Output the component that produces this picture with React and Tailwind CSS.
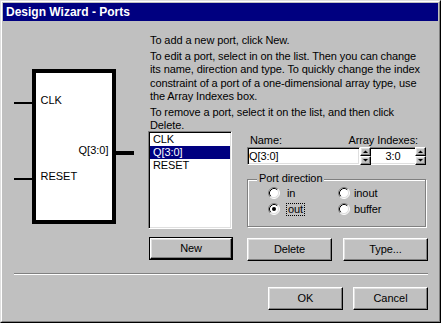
import React from 'react';

// classic 3D borders
const raised = "border border-t-white border-l-white border-r-black border-b-black shadow-[inset_-1px_-1px_0_#808080,inset_1px_1px_0_#dfdfdf]";
const sunken = "border border-t-[#808080] border-l-[#808080] border-r-white border-b-white shadow-[inset_1px_1px_0_#000,inset_-1px_-1px_0_#dfdfdf]";

function Button({ children, className = '' }) {
  return (
    <button className={`${raised} bg-[#c0c0c0] flex items-center justify-center text-[11px] leading-[13px] text-black shrink-0 ${className}`}>
      {children}
    </button>
  );
}

function Radio({ checked }) {
  return (
    <svg width="12" height="12" viewBox="0 0 12 12" className="shrink-0">
      <circle cx="6" cy="6" r="5" fill="#fff" />
      <path d="M2.11 9.89A5.5 5.5 0 0 1 9.89 2.11" fill="none" stroke="#808080" />
      <path d="M9.89 2.11A5.5 5.5 0 0 1 2.11 9.89" fill="none" stroke="#fff" />
      <path d="M2.82 9.18A4.5 4.5 0 0 1 9.18 2.82" fill="none" stroke="#000" />
      <path d="M9.18 2.82A4.5 4.5 0 0 1 2.82 9.18" fill="none" stroke="#dfdfdf" />
      {checked && <circle cx="6" cy="6" r="2" fill="#000" />}
    </svg>
  );
}

function Spin() {
  return (
    <div className="flex flex-col w-[11px] h-[18px] shrink-0">
      <div className={`${raised} h-[9px] bg-[#c0c0c0] flex items-center justify-center`}>
        <svg width="5" height="3" viewBox="0 0 5 3"><polygon points="0,3 2.5,0.5 5,3" fill="#000" /></svg>
      </div>
      <div className={`${raised} h-[9px] bg-[#c0c0c0] flex items-center justify-center`}>
        <svg width="5" height="3" viewBox="0 0 5 3"><polygon points="0,0 2.5,2.5 5,0" fill="#000" /></svg>
      </div>
    </div>
  );
}

function Symbol() {
  return (
    <svg width="122" height="160" viewBox="0 0 122 160" className="block">
      <rect x="20" y="4" width="80" height="151" fill="#fff" stroke="#000" strokeWidth="4" />
      <rect x="0" y="35" width="18" height="2" fill="#000" />
      <rect x="0" y="111" width="18" height="2" fill="#000" />
      <rect x="102" y="84" width="18" height="4" fill="#000" />
      <text x="26.5" y="37" fontSize="11" fill="#000" fontFamily="Liberation Sans, Arial, sans-serif">CLK</text>
      <text x="26.5" y="113" fontSize="11" fill="#000" fontFamily="Liberation Sans, Arial, sans-serif">RESET</text>
      <text x="94.5" y="87" fontSize="11" fill="#000" textAnchor="end" fontFamily="Liberation Sans, Arial, sans-serif">Q[3:0]</text>
    </svg>
  );
}

export default function App() {
  const ports = ['CLK', 'Q[3:0]', 'RESET'];

  return (
    <div className="w-[441px] h-[323px] bg-[#c0c0c0] border border-t-[#dfdfdf] border-l-[#dfdfdf] border-r-black border-b-black font-['Liberation_Sans',Arial,sans-serif] text-black">
      <div className="h-full border border-t-white border-l-white border-r-[#808080] border-b-[#808080] p-px flex flex-col">
        {/* title bar */}
        <div className="h-[18px] shrink-0 bg-[#000080] text-white font-bold text-[12px] leading-[18px] pl-[3px]">
          Design Wizard - Ports
        </div>

        <div className="flex h-[252px] shrink-0">
          {/* symbol preview */}
          <div className="w-[145px] shrink-0 pl-[11px] pt-[46px]">
            <Symbol />
          </div>

          <div className="flex-1 pt-[13px] text-[11px] tracking-[-0.1px]">
            <div className="h-[97px] pl-[2px] whitespace-nowrap">
              <p className="leading-[13px]">To add a new port, click New.</p>
              <p className="leading-[13.33px] mt-[3px]">
                To edit a port, select in on the list. Then you can change<br />
                its name, direction and type. To quickly change the index<br />
                constraint of a port of a one-dimensional array type, use<br />
                the Array Indexes box.
              </p>
              <p className="leading-[13px] mt-[3px]">
                To remove a port, select it on the list, and then click<br />
                Delete.
              </p>
            </div>

            <div className="flex">
              <div className="w-[85px] shrink-0">
                <div className={`${sunken} bg-white w-[84px] h-[98px] p-px`}>
                  {ports.map((p) => (
                    <div
                      key={p}
                      className={`h-[13px] leading-[13px] pl-[3px] ${p === 'Q[3:0]' ? 'bg-[#000080] text-white' : ''}`}
                    >
                      {p}
                    </div>
                  ))}
                </div>
                <div className="mt-[8px] ml-px w-[84px] h-[23px] border border-black flex">
                  <Button className="w-full h-full">New</Button>
                </div>
              </div>

              <div className="w-[179px] ml-[14px] shrink-0">
                <div className="pt-[3px] flex justify-between pl-[3px] pr-[8px] leading-[13px]">
                  <span>Name:</span>
                  <span>Array Indexes:</span>
                </div>
                <div className="flex h-[18px]">
                  <div className={`${sunken} bg-white w-[113px] shrink-0 pl-px flex items-center leading-[13px]`}>
                    Q[3:0]
                  </div>
                  <Spin />
                  <div className="w-[44px] shrink-0 bg-white border-t border-t-[#808080] border-b border-b-white shadow-[inset_0_1px_0_#000,inset_0_-1px_0_#dfdfdf] flex items-center justify-center leading-[13px]">
                    3:0
                  </div>
                  <Spin />
                </div>

                {/* port direction group */}
                <div className="relative mt-[14px] h-[48px] border border-[#808080] shadow-[inset_1px_1px_0_#fff,1px_1px_0_#fff] pt-[5px] pl-[20px]">
                  <span className="absolute left-[9px] top-[-8px] px-[2px] bg-[#c0c0c0] leading-[13px]">Port direction</span>
                  <div className="flex h-[16px] items-center leading-[13px]">
                    <div className="w-[70px] flex items-center">
                      <Radio />
                      <span className="ml-[7px]">in</span>
                    </div>
                    <div className="flex items-center">
                      <Radio />
                      <span className="ml-[4px]">inout</span>
                    </div>
                  </div>
                  <div className="flex h-[16px] items-center leading-[13px]">
                    <div className="w-[70px] flex items-center">
                      <Radio checked />
                      <span className="ml-[6px] border border-dotted border-black px-px leading-[11px]">out</span>
                    </div>
                    <div className="flex items-center">
                      <Radio />
                      <span className="ml-[4px]">buffer</span>
                    </div>
                  </div>
                </div>

                <div className="mt-[11px] flex gap-[11px]">
                  <Button className="w-[85px] h-[23px]">Delete</Button>
                  <Button className="w-[85px] h-[23px]">Type...</Button>
                </div>
              </div>
            </div>
          </div>
        </div>

        {/* separator */}
        <div className="ml-[11px] w-[414px] h-[2px] shrink-0 border-t border-t-[#808080] border-b border-b-white" />

        <div className="mt-[12px] flex justify-end gap-[10px] pr-[10px]">
          <Button className="w-[75px] h-[23px]">OK</Button>
          <Button className="w-[75px] h-[23px]">Cancel</Button>
        </div>
      </div>
    </div>
  );
}
